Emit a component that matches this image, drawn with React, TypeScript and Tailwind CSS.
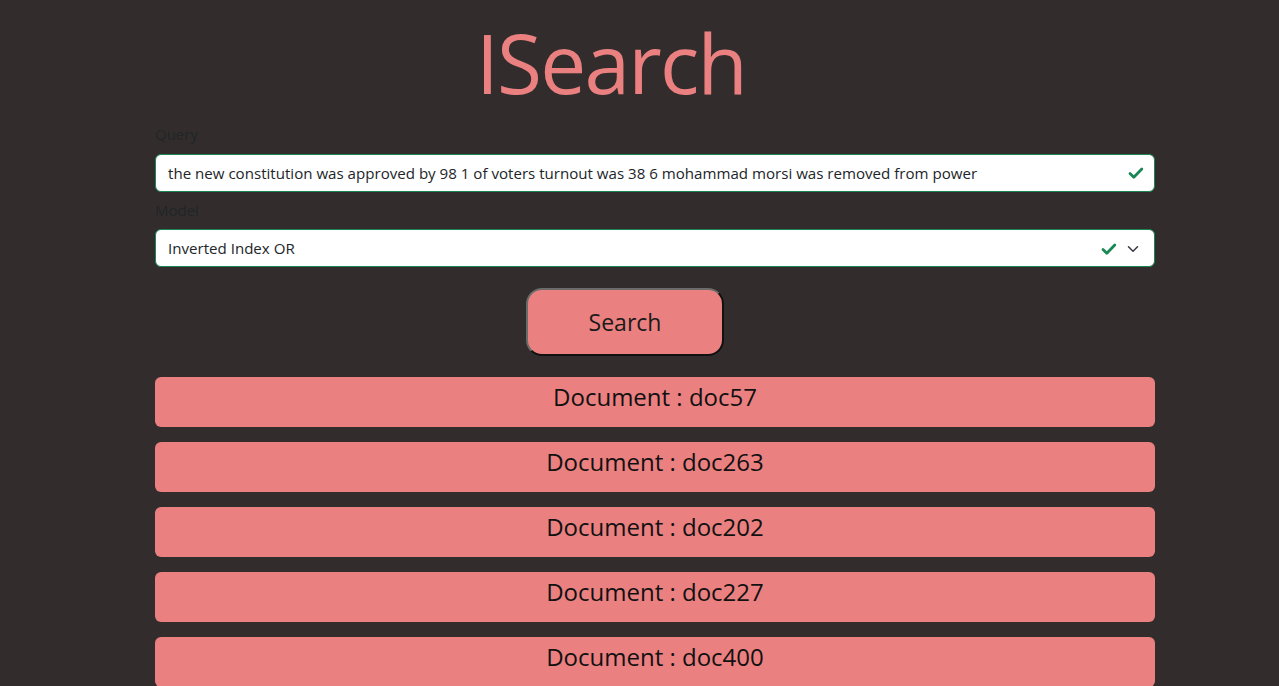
import { useState } from 'react';

const docs = ['doc57', 'doc263', 'doc202', 'doc227', 'doc400'];

function Check({ className }: { className?: string }) {
  return (
    <svg viewBox="0 0 16 16" className={className} fill="none">
      <path d="M2 8.5l3.8 3.8 8-8.3" stroke="#198754" strokeWidth="2.8" strokeLinecap="round" strokeLinejoin="round" />
    </svg>
  );
}

export default function App() {
  const [query, setQuery] = useState(
    'the new constitution was approved by 98 1 of voters turnout was 38 6 mohammad morsi was removed from power'
  );

  return (
    <div className="min-h-screen bg-[#322d2c] font-['Open_Sans',sans-serif] text-[#212529] pb-10">
      <div className="w-[1000px] ml-[155px] flex flex-col">
        <h1 className="text-[#eb8080] text-[82px] leading-[124px] pl-[321px] tracking-[-1.8px]">ISearch</h1>

        <label className="text-[15px] leading-6 mb-[8px] -mt-[2px]">Query</label>
        <div className="relative">
          <input
            value={query}
            onChange={e => setQuery(e.target.value)}
            className="w-full h-[38px] bg-white rounded-md border border-[#198754] pl-3 pr-10 text-[15.1px] text-[#212529] outline-none"
          />
          <Check className="absolute right-[11px] top-[11px] w-4 h-4" />
        </div>

        <label className="text-[15px] leading-6 mt-[6px] mb-[7px]">Model</label>
        <div className="relative h-[38px] bg-white rounded-md border border-[#198754] pl-3 flex items-center text-[15.1px]">
          <span>Inverted Index OR</span>
          <Check className="absolute right-[37px] top-[11px] w-4 h-4" />
          <svg viewBox="0 0 16 16" className="absolute right-[15px] top-[13px] w-3 h-3" fill="none">
            <path d="M2 5l6 6 6-6" stroke="#343a40" strokeWidth="2" strokeLinecap="round" strokeLinejoin="round" />
          </svg>
        </div>

        <div className="flex justify-start pl-[371px] mt-[21px]">
          <button className="w-[198px] h-[68px] rounded-2xl bg-[#eb8080] border-2 border-t-[#6b6b6b] border-l-[#6b6b6b] border-r-[#111] border-b-[#111] text-[23px] text-[#1a1a1a]">
            Search
          </button>
        </div>

        <div className="flex flex-col gap-[15px] mt-[21px]">
          {docs.map(d => (
            <div key={d} className="h-[50px] bg-[#eb8080] rounded-md text-center text-[24px] leading-[40px] text-[#111]">
              Document : {d}
            </div>
          ))}
        </div>
      </div>
    </div>
  );
}
